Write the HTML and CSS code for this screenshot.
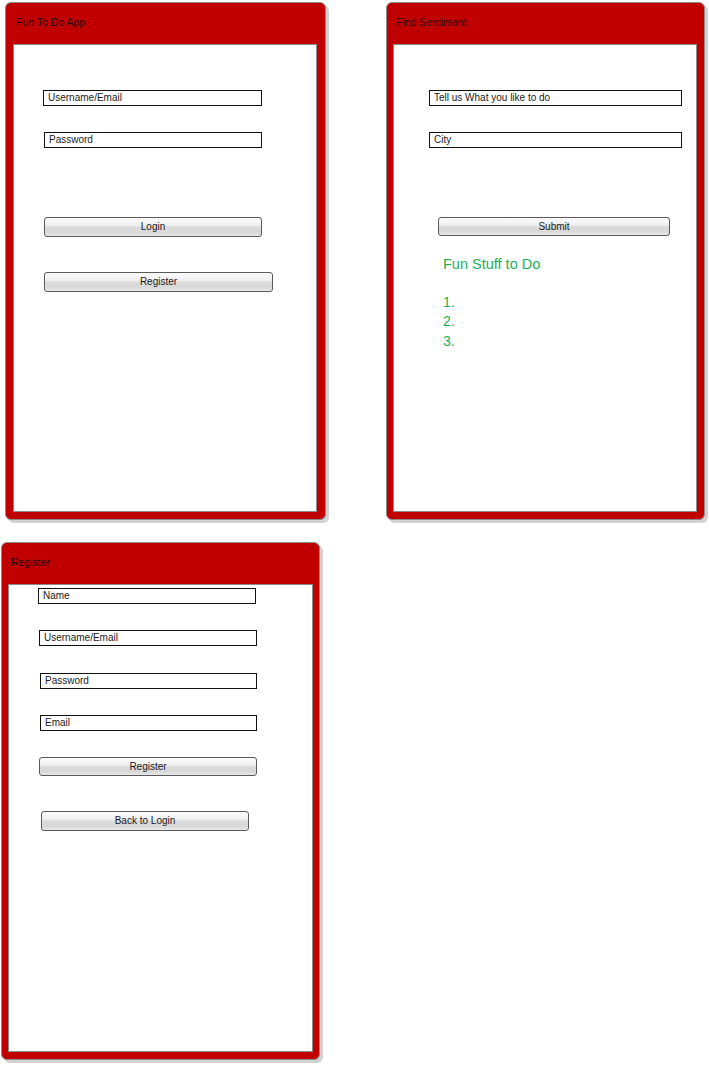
FILE: index.html
```html
<!DOCTYPE html>
<html>
<head>
<meta charset="utf-8">
<link rel="stylesheet" href="styles.css">
</head>
<body>
<div class="page">
  <div class="row row-top">
    <section class="panel panel-login">
      <div class="panel-title">Fun To Do App</div>
      <div class="panel-body">
        <div class="field l-user">Username/Email</div>
        <div class="field l-pass">Password</div>
        <div class="btn l-login">Login</div>
        <div class="btn l-register">Register</div>
      </div>
    </section>
    <section class="panel panel-sentiment">
      <div class="panel-title">Find Sentiment</div>
      <div class="panel-body">
        <div class="field s-like">Tell us What you like to do</div>
        <div class="field s-city">City</div>
        <div class="btn s-submit">Submit</div>
        <div class="fun-title">Fun Stuff to Do</div>
        <ol class="fun-list">
          <li></li>
          <li></li>
          <li></li>
        </ol>
      </div>
    </section>
  </div>
  <div class="row row-bottom">
    <section class="panel panel-register">
      <div class="panel-title">Register</div>
      <div class="panel-body">
        <div class="field r-name">Name</div>
        <div class="field r-user">Username/Email</div>
        <div class="field r-pass">Password</div>
        <div class="field r-email">Email</div>
        <div class="btn r-register">Register</div>
        <div class="btn r-back">Back to Login</div>
      </div>
    </section>
  </div>
</div>
</body>
</html>
```

FILE: styles.css
```css
html, body {
  margin: 0;
  padding: 0;
  background: #ffffff;
}

body {
  font-family: "Liberation Sans", Arial, sans-serif;
  color: #1a1a1a;
}

.page {
  width: 709px;
  height: 1065px;
  padding-top: 2px;
  box-sizing: border-box;
}

.row {
  display: flex;
  align-items: flex-start;
}

.row-bottom {
  margin-top: 22px;
}

.panel {
  box-sizing: border-box;
  height: 518px;
  display: flex;
  flex-direction: column;
  background: #c00000;
  border: 1px solid #8c8c8c;
  border-radius: 6px;
  box-shadow: 3px 3px 0 #d2d2d2;
}

.panel-login {
  width: 321px;
  margin-left: 5px;
  padding: 0 8px 7px 7px;
}

.panel-sentiment {
  width: 319px;
  margin-left: 60px;
  padding: 0 7px 7px 6px;
}

.panel-register {
  width: 319px;
  margin-left: 1px;
  padding: 0 6px 7px 6px;
}

.panel-title {
  box-sizing: border-box;
  height: 41px;
  flex: none;
  padding: 13px 0 0 3px;
  font-size: 10.5px;
  line-height: 12px;
  color: #1a0000;
}

.panel-body {
  flex: 1;
  background: #ffffff;
  border: 1px solid #8a8a8a;
  display: flex;
  flex-direction: column;
  align-items: flex-start;
}

.field {
  box-sizing: border-box;
  height: 16px;
  border: 1px solid #111;
  padding-left: 4px;
  font-size: 10px;
  line-height: 14px;
  color: #1a1a1a;
  white-space: nowrap;
}

.btn {
  box-sizing: border-box;
  height: 20px;
  border: 1px solid #5a5a5a;
  border-radius: 3px;
  background: linear-gradient(#fbfbfb 0%, #f0f0f0 40%, #dadada 52%, #d9d9d9 80%, #e8e8e8 100%);
  font-size: 10px;
  line-height: 18px;
  text-align: center;
  color: #1a1a1a;
}

/* login panel */
.l-user { margin: 45px 0 0 29px; width: 219px; }
.l-pass { margin: 26px 0 0 30px; width: 218px; }
.l-login { margin: 69px 0 0 30px; width: 218px; }
.l-register { margin: 35px 0 0 30px; width: 229px; }

/* sentiment panel */
.s-like { margin: 45px 0 0 35px; width: 253px; }
.s-city { margin: 26px 0 0 35px; width: 253px; }
.s-submit { margin: 69px 0 0 44px; width: 232px; height: 19px; line-height: 17px; }

.fun-title {
  margin: 19px 0 0 49px;
  font-family: "Liberation Sans", Arial, sans-serif;
  font-size: 14.5px;
  line-height: 18px;
  color: #1eb055;
}

.fun-list {
  margin: 20px 0 0 49px;
  padding: 0;
  list-style: decimal inside;
  font-size: 14px;
  line-height: 19.3px;
  color: #1eb055;
}

.fun-list li {
  height: 19.3px;
}

/* register panel */
.r-name { margin: 3px 0 0 29px; width: 218px; }
.r-user { margin: 26px 0 0 30px; width: 218px; }
.r-pass { margin: 27px 0 0 31px; width: 217px; }
.r-email { margin: 26px 0 0 31px; width: 217px; }
.r-register { margin: 26px 0 0 30px; width: 218px; height: 19px; line-height: 17px; }
.r-back { margin: 35px 0 0 32px; width: 208px; }
```
